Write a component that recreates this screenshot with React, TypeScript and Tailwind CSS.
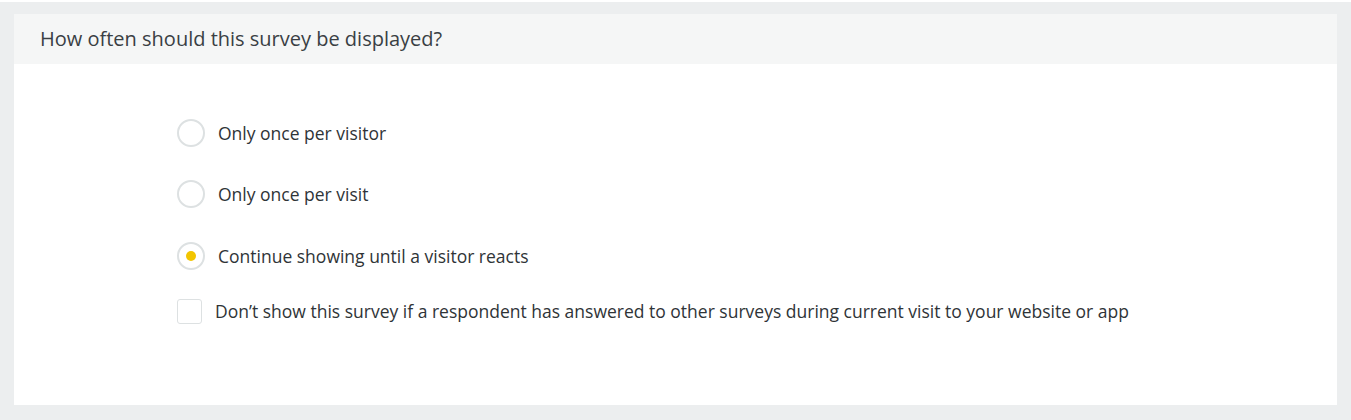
import React, { useState } from "react";

const options = [
  { id: "visitor", label: "Only once per visitor", mt: "mt-0" },
  { id: "visit", label: "Only once per visit", mt: "mt-[33px]" },
  { id: "until", label: "Continue showing until a visitor reacts", mt: "mt-[34px]" },
];

const App = () => {
  const [selected, setSelected] = useState("until");
  const [skip, setSkip] = useState(false);

  return (
    <div className="w-[1351px] h-[420px] bg-white pt-[2px] font-['Open_Sans',sans-serif]">
      <div className="h-[418px] bg-[#eceeef] px-[14px] pt-[12px]">
        <div className="h-[391px] bg-white flex flex-col">
          <div className="h-[50px] bg-[#f5f6f6] flex items-center pl-[26px]">
            <h2 className="text-[20px] text-[#3a3f44]">
              How often should this survey be displayed?
            </h2>
          </div>
          <div className="flex flex-col pt-[55px] pl-[163px]">
            {options.map((opt) => (
              <label
                key={opt.id}
                className={`flex items-center h-[28px] cursor-pointer ${opt.mt}`}
                onClick={() => setSelected(opt.id)}
              >
                <span className="w-[28px] h-[28px] rounded-full border-2 border-[#dde1e2] flex items-center justify-center shrink-0">
                  {selected === opt.id && (
                    <span className="w-[10px] h-[10px] rounded-full bg-[#f2c500]" />
                  )}
                </span>
                <span className="ml-[13px] text-[17.5px] text-[#2f3437]">
                  {opt.label}
                </span>
              </label>
            ))}
            <label
              className="flex items-center h-[25px] mt-[29px] cursor-pointer"
              onClick={() => setSkip(!skip)}
            >
              <span className="w-[25px] h-[25px] rounded-[3px] border border-[#dde1e2] shrink-0 flex items-center justify-center">
                {skip && <span className="w-[11px] h-[11px] bg-[#f2c500]" />}
              </span>
              <span className="ml-[13px] text-[17.5px] text-[#2f3437]">
                Don’t show this survey if a respondent has answered to other
                surveys during current visit to your website or app
              </span>
            </label>
          </div>
        </div>
      </div>
    </div>
  );
};

export default App;
